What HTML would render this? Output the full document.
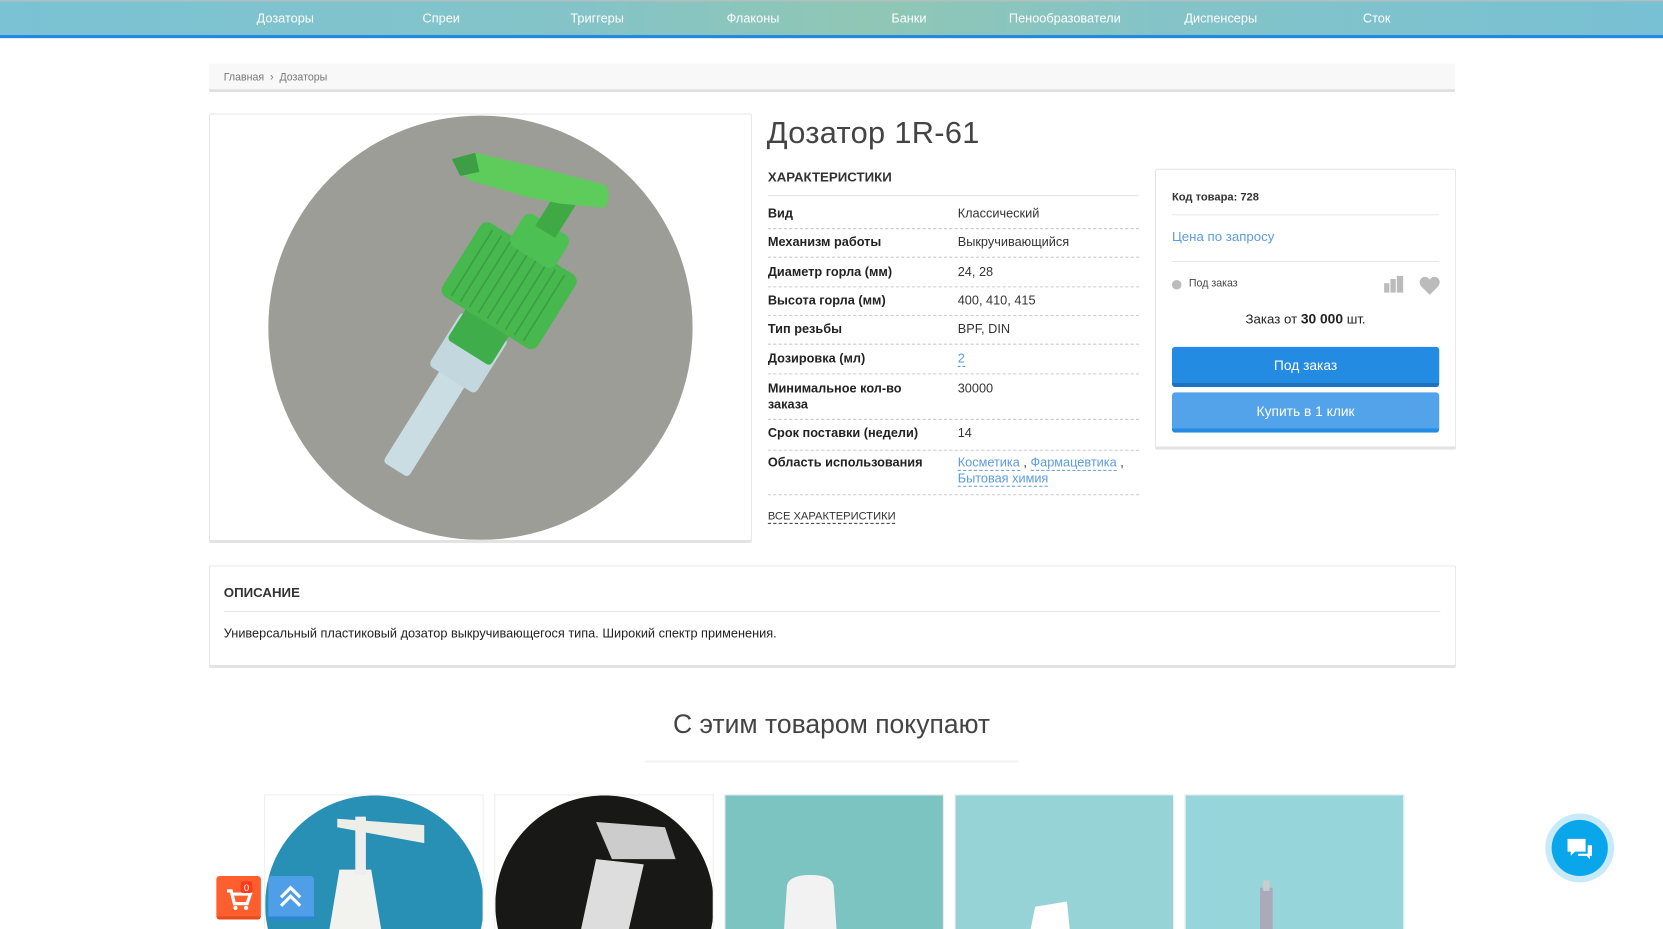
<!DOCTYPE html>
<html><head><meta charset="utf-8">
<style>
*{margin:0;padding:0;box-sizing:border-box}
html,body{width:1663px;height:929px;overflow:hidden;background:#fff}
#w{position:absolute;left:0;top:0;width:1568px;height:876px;overflow:hidden;transform:scale(1.06059);transform-origin:0 0;font-family:"Liberation Sans","DejaVu Sans",sans-serif;color:#333}
.a{position:absolute}
.nav{left:0;top:0;width:1568px;height:33px;background:linear-gradient(90deg,#7ac2d4 0%,#84c4c8 35%,#90c6b4 52%,#84c4c8 70%,#78c0d4 100%);border-top:1px solid #bbb}
.navb{left:0;top:33px;width:1568px;height:3px;background:#2389e0}
.nav span{position:absolute;top:9px;color:#fff;font-size:12px;transform:translateX(-50%);white-space:nowrap}
.bc{left:197px;top:60px;width:1175px;height:27px;background:#f8f8f8;border-bottom:3px solid #e0e0e0;border-radius:2px;font-size:10px;color:#777;padding:8px 14px}
.box{background:#fff;border:1px solid #e6e6e6;border-bottom:3px solid #e3e3e3;border-radius:2px}
.row{position:absolute;left:724px;width:350px;border-bottom:1px dashed #ccc;font-size:12px}
.row b{position:absolute;left:0;top:0;font-weight:bold;color:#222;width:150px;line-height:15px}
.row i{position:absolute;left:179px;top:0;font-style:normal;color:#333;line-height:15px}
.lk{color:#5b9be0;border-bottom:1px dashed #5b9be0}
.btn{position:absolute;left:1105px;width:252px;height:38px;border-radius:3px;color:#fff;font-size:13px;text-align:center;line-height:35px}
.card{position:absolute;top:749px;width:207px;height:127px;overflow:hidden;border:1px solid #eee;border-bottom:none}
</style></head><body><div id="w">
<div class="a nav">
<span style="left:269px">Дозаторы</span><span style="left:416px">Спреи</span><span style="left:563px">Триггеры</span><span style="left:710px">Флаконы</span><span style="left:857px">Банки</span><span style="left:1004px">Пенообразователи</span><span style="left:1151px">Диспенсеры</span><span style="left:1298px">Сток</span>
</div>
<div class="a navb"></div>
<div class="a bc">Главная &nbsp;›&nbsp; Дозаторы</div>

<div class="a box" style="left:197px;top:107px;width:512px;height:405px;overflow:hidden">
<svg width="512" height="405" style="position:absolute;left:0;top:0">
<circle cx="255" cy="201" r="200" fill="#9d9d98"/>
<g transform="rotate(32 281 163)">
<rect x="268" y="250" width="28" height="115" rx="4" fill="#c9dde3"/>
<rect x="256" y="205" width="52" height="60" rx="5" fill="#c2d8de"/>
<rect x="258" y="195" width="48" height="40" rx="4" fill="#3fae4a"/>
<rect x="228" y="120" width="106" height="82" rx="8" fill="#46b84e"/>
<g stroke="#3a9e42" stroke-width="1.5">
<line x1="240" y1="125" x2="240" y2="198"/><line x1="250" y1="125" x2="250" y2="198"/><line x1="260" y1="125" x2="260" y2="198"/><line x1="270" y1="125" x2="270" y2="198"/><line x1="280" y1="125" x2="280" y2="198"/><line x1="290" y1="125" x2="290" y2="198"/><line x1="300" y1="125" x2="300" y2="198"/><line x1="310" y1="125" x2="310" y2="198"/><line x1="320" y1="125" x2="320" y2="198"/>
</g>
<rect x="258" y="92" width="50" height="36" rx="8" fill="#4cc052"/>
<rect x="272" y="55" width="22" height="45" fill="#3faa45"/>
</g>
<path d="M228 42 L250 36 L310 50 L372 66 Q380 76 372 88 L330 84 L300 78 L244 62 Z" fill="#5ecc5a"/>
<path d="M228 42 L250 36 L254 54 L236 58Z" fill="#3d9e45"/>
</svg>
</div>

<div class="a" style="left:723px;top:110px;font-size:29px;font-weight:normal;color:#444;letter-spacing:0.3px">Дозатор 1R-61</div>
<div class="a" style="left:724px;top:160px;font-size:12.5px;font-weight:bold;color:#333">ХАРАКТЕРИСТИКИ</div>
<div class="a" style="left:724px;top:184px;width:350px;border-top:1px solid #e3e3e3"></div>
<div class="row" style="top:194px;height:22px"><b>Вид</b><i>Классический</i></div>
<div class="row" style="top:221px;height:22px"><b>Механизм работы</b><i>Выкручивающийся</i></div>
<div class="row" style="top:249px;height:22px"><b>Диаметр горла (мм)</b><i>24, 28</i></div>
<div class="row" style="top:276px;height:22px"><b>Высота горла (мм)</b><i>400, 410, 415</i></div>
<div class="row" style="top:303px;height:22px"><b>Тип резьбы</b><i>BPF, DIN</i></div>
<div class="row" style="top:331px;height:22px"><b>Дозировка (мл)</b><i><span class="lk">2</span></i></div>
<div class="row" style="top:359px;height:37px"><b>Минимальное кол-во заказа</b><i>30000</i></div>
<div class="row" style="top:401px;height:24px"><b style="width:175px">Срок поставки (недели)</b><i>14</i></div>
<div class="row" style="top:429px;height:38px"><b style="width:175px">Область использования</b><i><span class="lk">Косметика</span> , <span class="lk">Фармацевтика</span> ,<br><span class="lk">Бытовая химия</span></i></div>
<div class="a" style="left:724px;top:481px;font-size:10.5px;color:#333;border-bottom:1px dashed #333">ВСЕ ХАРАКТЕРИСТИКИ</div>

<div class="a box" style="left:1089px;top:159px;width:284px;height:265px"></div>
<div class="a" style="left:1105px;top:180px;font-size:10.5px;font-weight:bold;color:#333">Код товара: 728</div>
<div class="a" style="left:1105px;top:202px;width:252px;border-top:1px solid #e8e8e8"></div>
<div class="a" style="left:1105px;top:216px;font-size:12.5px;color:#5b9be0">Цена по запросу</div>
<div class="a" style="left:1105px;top:246px;width:252px;border-top:1px solid #e8e8e8"></div>
<div class="a" style="left:1105px;top:264px;width:9px;height:9px;border-radius:50%;background:#bbb"></div>
<div class="a" style="left:1121px;top:262px;font-size:10px;color:#444">Под заказ</div>
<svg class="a" style="left:1305px;top:260px" width="20" height="16"><rect x="0" y="7" width="5" height="9" fill="#bbb"/><rect x="6" y="3" width="5" height="13" fill="#bbb"/><rect x="12" y="0" width="6" height="16" fill="#bbb"/></svg>
<svg class="a" style="left:1338px;top:260px" width="20" height="18" viewBox="0 0 20 18"><path d="M10 18 L2 10 Q-1 6 2 2.5 Q6 -1 10 3.5 Q14 -1 18 2.5 Q21 6 18 10Z" fill="#bbb"/></svg>
<div class="a" style="left:1105px;top:293px;width:252px;text-align:center;font-size:12.5px;color:#222">Заказ от <b style="font-size:13px">30 000</b> шт.</div>
<div class="btn" style="top:327px;background:#248be3;border-bottom:4px solid #1a72c0">Под заказ</div>
<div class="btn" style="top:370px;background:#52a3ea;border-bottom:4px solid #248be3">Купить в 1 клик</div>

<div class="a box" style="left:197px;top:533px;width:1176px;height:97px"></div>
<div class="a" style="left:211px;top:552px;font-size:12.5px;font-weight:bold;color:#333">ОПИСАНИЕ</div>
<div class="a" style="left:211px;top:576px;width:1147px;border-top:1px solid #e3e3e3"></div>
<div class="a" style="left:211px;top:590px;font-size:12px;color:#222">Универсальный пластиковый дозатор выкручивающегося типа. Широкий спектр применения.</div>

<div class="a" style="left:0;top:669px;width:1568px;text-align:center;font-size:25px;font-weight:300;color:#444">С этим товаром покупают</div>
<div class="a" style="left:608px;top:717px;width:352px;height:2px;background:#f2f2f2"></div>

<div class="card" style="left:249px"><svg width="207" height="130"><circle cx="103" cy="103" r="103" fill="#2990b5"/><path d="M60 130 L70 70 L100 70 L110 130Z" fill="#f2f2ee"/><rect x="85" y="20" width="10" height="55" fill="#eee"/><path d="M68 22 L150 28 L150 45 L68 30Z" fill="#eeeee8"/></svg></div>
<div class="card" style="left:466px"><svg width="207" height="130"><circle cx="103" cy="103" r="103" fill="#181816"/><path d="M80 130 L95 60 L140 65 L125 130Z" fill="#ddd"/><path d="M95 25 L160 30 L170 60 L110 60Z" fill="#ccc"/></svg></div>
<div class="card" style="left:683px;background:#7cc4c2"><svg width="207" height="130"><path d="M55 130 L58 85 Q60 75 80 75 Q100 75 102 85 L105 130Z" fill="#f2f2f2"/></svg></div>
<div class="card" style="left:900px;background:#96d3d6"><svg width="207" height="130"><path d="M70 130 L75 105 L105 100 L108 130Z" fill="#fff"/></svg></div>
<div class="card" style="left:1117px;background:#96d6da"><svg width="207" height="130"><rect x="70" y="87" width="12" height="43" fill="#aab"/><rect x="73" y="80" width="6" height="10" fill="#ccc"/></svg></div>

<div class="a" style="left:204px;top:826px;width:42px;height:41px;background:#ff5e2e;border-radius:3px;border-bottom:3px solid #e84a1a"><svg width="42" height="40" viewBox="0 0 42 40"><path d="M10 14 L14 14 L17 26 L29 26 L32 17 L16 17" stroke="#fff" stroke-width="3" fill="none"/><circle cx="18" cy="30" r="2" fill="#fff"/><circle cx="28" cy="30" r="2" fill="#fff"/><rect x="23" y="5" width="11" height="11" rx="2" fill="#ff3b1a"/><text x="28.5" y="14" font-size="9" fill="#fff" text-anchor="middle" font-family="Liberation Sans">0</text></svg></div>
<div class="a" style="left:253px;top:826px;width:43px;height:41px;background:#4f9fe8;border-radius:3px;border-bottom:3px solid #2c85d8"><svg width="43" height="40"><path d="M12 20 L21 11 L30 20 M12 28 L21 19 L30 28" stroke="#fff" stroke-width="3" fill="none"/></svg></div>

<div class="a" style="left:1457px;top:767px;width:65px;height:65px;border-radius:50%;background:#c8eaf8"></div>
<div class="a" style="left:1463px;top:773px;width:53px;height:53px;border-radius:50%;background:#0aa6ec"><svg width="53" height="53"><path d="M15 18 h17 v12 h-10 l-4 4 v-4 h-3z" fill="#fff"/><path d="M34 24 h4 v10 h-2 v3 l-3 -3 h-8 v-2 h9z" fill="#fff"/></svg></div>
</div></body></html>
